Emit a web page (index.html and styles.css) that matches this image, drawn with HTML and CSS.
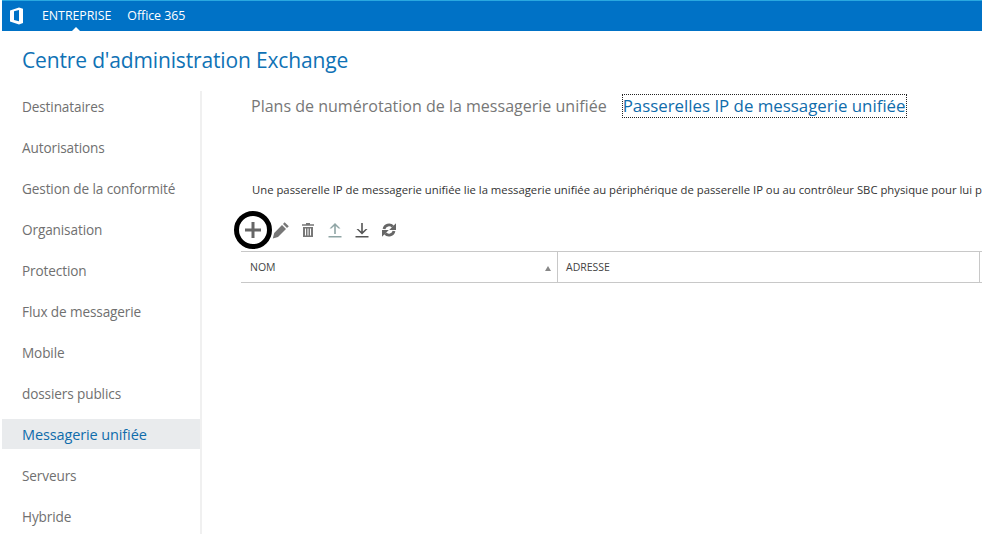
FILE: index.html
```html
<!DOCTYPE html>
<html lang="fr">
<head>
<meta charset="utf-8">
<title>Centre d'administration Exchange</title>
<link rel="stylesheet" href="styles.css">
</head>
<body>
<header class="topbar">
  <svg class="logo" width="16" height="18" viewBox="0 0 16 18"><path fill="#fff" d="M1 3.600 10 .6l4 1.200v14.200l-4 1.600-9-3zM10 3 5 4.200v8.900l5 1.200z"/></svg>
  <nav class="topnav">
    <span class="topitem active">ENTREPRISE</span>
    <span class="topitem">Office 365</span>
  </nav>
</header>
<h1 class="title">Centre d'administration Exchange</h1>
<div class="main">
  <aside class="sidebar">
    <div class="navitem">Destinataires</div>
    <div class="navitem">Autorisations</div>
    <div class="navitem">Gestion de la conformité</div>
    <div class="navitem">Organisation</div>
    <div class="navitem">Protection</div>
    <div class="navitem">Flux de messagerie</div>
    <div class="navitem">Mobile</div>
    <div class="navitem">dossiers publics</div>
    <div class="navitem selected">Messagerie unifiée</div>
    <div class="navitem">Serveurs</div>
    <div class="navitem">Hybride</div>
  </aside>
  <section class="content">
    <div class="tabs">
      <span class="tab">Plans de numérotation de la messagerie unifiée</span>
      <span class="tab current">Passerelles IP de messagerie unifiée</span>
    </div>
    <p class="desc">Une passerelle IP de messagerie unifiée lie la messagerie unifiée au périphérique de passerelle IP ou au contrôleur SBC physique pour lui p</p>
    <div class="toolbar">
      <span class="tool plus">
        <svg width="18" height="18" viewBox="0 0 18 18"><path fill="none" stroke="#666" stroke-width="3" d="M9 1v16M1 9h16"/></svg>
      </span>
      <span class="tool">
        <svg width="18" height="18" viewBox="0 0 18 18"><path fill="#777" d="M12.600 1.200 16.800 5.200 15 7 11 3zM10 4l4 4-8 8-5.200 1.600L2.200 12z"/></svg>
      </span>
      <span class="tool">
        <svg width="18" height="18" viewBox="0 0 18 18"><path fill="#777" fill-rule="evenodd" d="M7 2h4v1.200h4v1.600H3V3.200h4zM4 6h10v10H4zm2 1.500V14.500h1V7.500zm2.500 0V14.500h1V7.500zm2.500 0V14.500h1V7.500z"/></svg>
      </span>
      <span class="tool">
        <svg width="18" height="18" viewBox="0 0 18 18"><path fill="#8fa5a5" d="M9 2l5.500 5.500h-1.900L9.800 4.900V13H8.200V4.900L5.400 7.500H3.500zM2.500 15h13v1.400h-13z"/></svg>
      </span>
      <span class="tool">
        <svg width="18" height="18" viewBox="0 0 18 18"><path fill="#555" d="M9 13.500 3.500 8h1.900l2.800 2.600V2h1.600v8.600L12.600 8h1.900zM2.500 15h13v1.400h-13z"/></svg>
      </span>
      <span class="tool">
        <svg width="18" height="18" viewBox="0 0 18 18"><path fill="none" stroke="#666" stroke-width="2.800" d="M4 8A5.200 5.200 0 0 1 12.800 5.400M14 10A5.200 5.200 0 0 1 5.200 12.600"/><path fill="#666" d="M16 2.200V9H9.200zM2 15.800V9h6.800z"/></svg>
      </span>
    </div>
    <div class="thead">
      <div class="th th-name">NOM<span class="sort"></span></div>
      <div class="th th-addr">ADRESSE</div>
    </div>
  </section>
</div>
</body>
</html>
```
FILE: styles.css
```css
html, body {
  margin: 0;
  padding: 0;
  height: 534px;
  overflow: hidden;
  background: #fff;
  font-family: "Open Sans", "Noto Sans", sans-serif;
}
.topbar {
  display: flex;
  align-items: center;
  height: 30px;
  margin-left: 2px;
  background: #0072c6;
  border-top: 1px solid #29a8e0;
}
.logo {
  margin-left: 7px;
}
.topnav {
  display: flex;
  gap: 16px;
  margin-left: 17px;
  position: relative;
  top: -1px;
}
.topitem {
  font-size: 12.400px;
  color: #fff;
  position: relative;
  letter-spacing: -0.05px;
}
.topitem.active::after {
  content: "";
  position: absolute;
  left: 30px;
  bottom: -7px;
  border: 4px solid transparent;
  border-top: 0;
  border-bottom-color: #fff;
}
.title {
  margin: 0;
  padding: 14px 0 0 22px;
  height: 46px;
  font-size: 21px;
  line-height: 30px;
  font-weight: 400;
  color: #0f72b5;
  letter-spacing: -0.15px;
}
.main {
  display: flex;
}
.sidebar {
  box-sizing: border-box;
  width: 200px;
  height: 443px;
  margin-left: 2px;
  border-right: 2px solid #f0f0f0;
  display: flex;
  flex-direction: column;
  gap: 11px;
}
.navitem {
  height: 30px;
  line-height: 32px;
  padding-left: 20px;
  font-size: 13.600px;
  color: #707070;
  letter-spacing: -0.12px;
  white-space: nowrap;
}
.navitem.selected {
  background: #e9ebed;
  color: #0f6cab;
  font-size: 14.500px;
}
.content {
  flex: 1;
  min-width: 0;
  padding-left: 39px;
}
.tabs {
  display: flex;
  align-items: center;
  gap: 16px;
  height: 28px;
  margin: 1px 0 0 10px;
  white-space: nowrap;
}
.tab {
  font-size: 16.050px;
  color: #777;
}
.tab.current {
  font-size: 16.850px;
  color: #0f6cab;
  outline: 1px dotted #222;
  line-height: 22px;
}
.desc {
  margin: 63px 0 0 11px;
  font-size: 11.300px;
  line-height: 14px;
  color: #333;
  white-space: nowrap;
  overflow: hidden;
}
.toolbar {
  display: flex;
  align-items: center;
  gap: 9px;
  margin: 23px 0 0 3px;
  height: 20px;
}
.tool {
  display: flex;
  width: 18px;
  height: 18px;
}
.plus {
  position: relative;
  margin-right: 1px;
}
.plus::before {
  content: "";
  position: absolute;
  left: -10px;
  top: -10px;
  width: 28px;
  height: 28px;
  border: 5px solid #000;
  border-radius: 50%;
}
.thead {
  display: flex;
  height: 30px;
  margin-top: 11px;
  border-top: 1px solid #c8c8c8;
  border-bottom: 1px solid #c8c8c8;
  font-size: 10.500px;
  color: #444;
}
.th {
  display: flex;
  align-items: center;
  box-sizing: border-box;
  padding-left: 8px;
  border-right: 1px solid #c8c8c8;
  position: relative;
}
.th-name {
  width: 317px;
  padding-left: 9px;
}
.th-addr {
  width: 422px;
}
.sort {
  position: absolute;
  right: 6px;
  top: 14px;
  border: 3.500px solid transparent;
  border-top: 0;
  border-bottom: 5px solid #888;
}
```
